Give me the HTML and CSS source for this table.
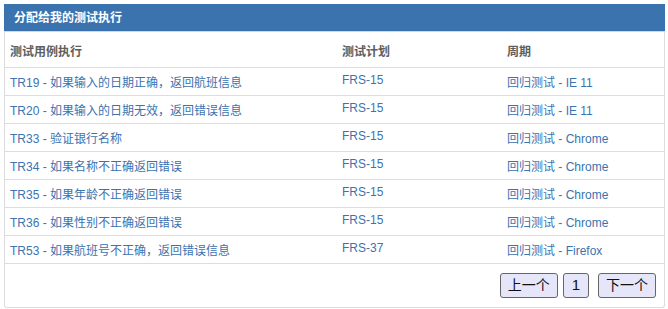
FILE: index.html
```html
<!DOCTYPE html>
<html lang="zh-CN">
<head>
<meta charset="utf-8">
<title>分配给我的测试执行</title>
<link rel="stylesheet" href="styles.css">
</head>
<body>
<div class="panel">
  <div class="panel-header">分配给我的测试执行</div>
  <table class="grid">
    <thead>
      <tr><th class="c1">测试用例执行</th><th class="c2">测试计划</th><th class="c3">周期</th></tr>
    </thead>
    <tbody>
      <tr><td><a href="#">TR19 - 如果输入的日期正确，返回航班信息</a></td><td><a href="#">FRS-15</a></td><td><a href="#">回归测试 - IE 11</a></td></tr>
      <tr><td><a href="#">TR20 - 如果输入的日期无效，返回错误信息</a></td><td><a href="#">FRS-15</a></td><td><a href="#">回归测试 - IE 11</a></td></tr>
      <tr><td><a href="#">TR33 - 验证银行名称</a></td><td><a href="#">FRS-15</a></td><td><a href="#">回归测试 - Chrome</a></td></tr>
      <tr><td><a href="#">TR34 - 如果名称不正确返回错误</a></td><td><a href="#">FRS-15</a></td><td><a href="#">回归测试 - Chrome</a></td></tr>
      <tr><td><a href="#">TR35 - 如果年龄不正确返回错误</a></td><td><a href="#">FRS-15</a></td><td><a href="#">回归测试 - Chrome</a></td></tr>
      <tr><td><a href="#">TR36 - 如果性别不正确返回错误</a></td><td><a href="#">FRS-15</a></td><td><a href="#">回归测试 - Chrome</a></td></tr>
      <tr><td><a href="#">TR53 - 如果航班号不正确，返回错误信息</a></td><td><a href="#">FRS-37</a></td><td><a href="#">回归测试 - Firefox</a></td></tr>
    </tbody>
  </table>
  <div class="pager">
    <button class="pbtn">上一个</button>
    <button class="pbtn pnum">1</button>
    <button class="pbtn">下一个</button>
  </div>
</div>
</body>
</html>
```
FILE: styles.css
```css
html, body {
  margin: 0;
  padding: 0;
  background: #ffffff;
}
body {
  padding: 4px 3px 0 4px;
  font-family: "Liberation Sans", "Noto Sans CJK SC", sans-serif;
  font-size: 12px;
  color: #333333;
}
.panel {
  width: 661px;
  height: 304px;
  border: 1px solid #dcdcdc;
  border-top: none;
  border-radius: 0 0 3px 3px;
  box-sizing: border-box;
  display: flex;
  flex-direction: column;
}
.panel-header {
  background: #3b73af;
  color: #ffffff;
  font-weight: bold;
  font-size: 12px;
  height: 28px;
  line-height: 28px;
  padding-left: 10px;
  margin: 0 -1px;
  border-bottom: 1px solid #c9d9ea;
  box-sizing: border-box;
}
.grid {
  width: 100%;
  border-collapse: collapse;
  font-size: 12px;
}
.grid th {
  text-align: left;
  font-weight: bold;
  color: #5e5e5e;
  height: 35px;
  padding: 3px 5px 0 5px;
  box-sizing: border-box;
  vertical-align: middle;
  border-bottom: 1px solid #dddddd;
}
.grid td {
  height: 28px;
  padding: 5px 5px 0 5px;
  box-sizing: border-box;
  vertical-align: top;
  border-bottom: 1px solid #dddddd;
}
.grid .c1 { width: 332px; }
.grid .c2 { width: 165px; }
.grid a {
  color: #3b73af;
  text-decoration: none;
}
.pager {
  display: flex;
  justify-content: flex-end;
  gap: 5px;
  padding: 9px 8px 0 0;
}
.pbtn {
  font-family: "Liberation Sans", "Noto Sans CJK SC", sans-serif;
  font-size: 14px;
  color: #111111;
  background: #e6e6fa;
  border: 1px solid #666666;
  border-radius: 3px;
  height: 25px;
  padding: 0 7px;
  line-height: 20px;
  box-sizing: border-box;
}
.pnum {
  font-size: 15px;
  padding: 0 8px;
  margin-right: 4px;
}
```
